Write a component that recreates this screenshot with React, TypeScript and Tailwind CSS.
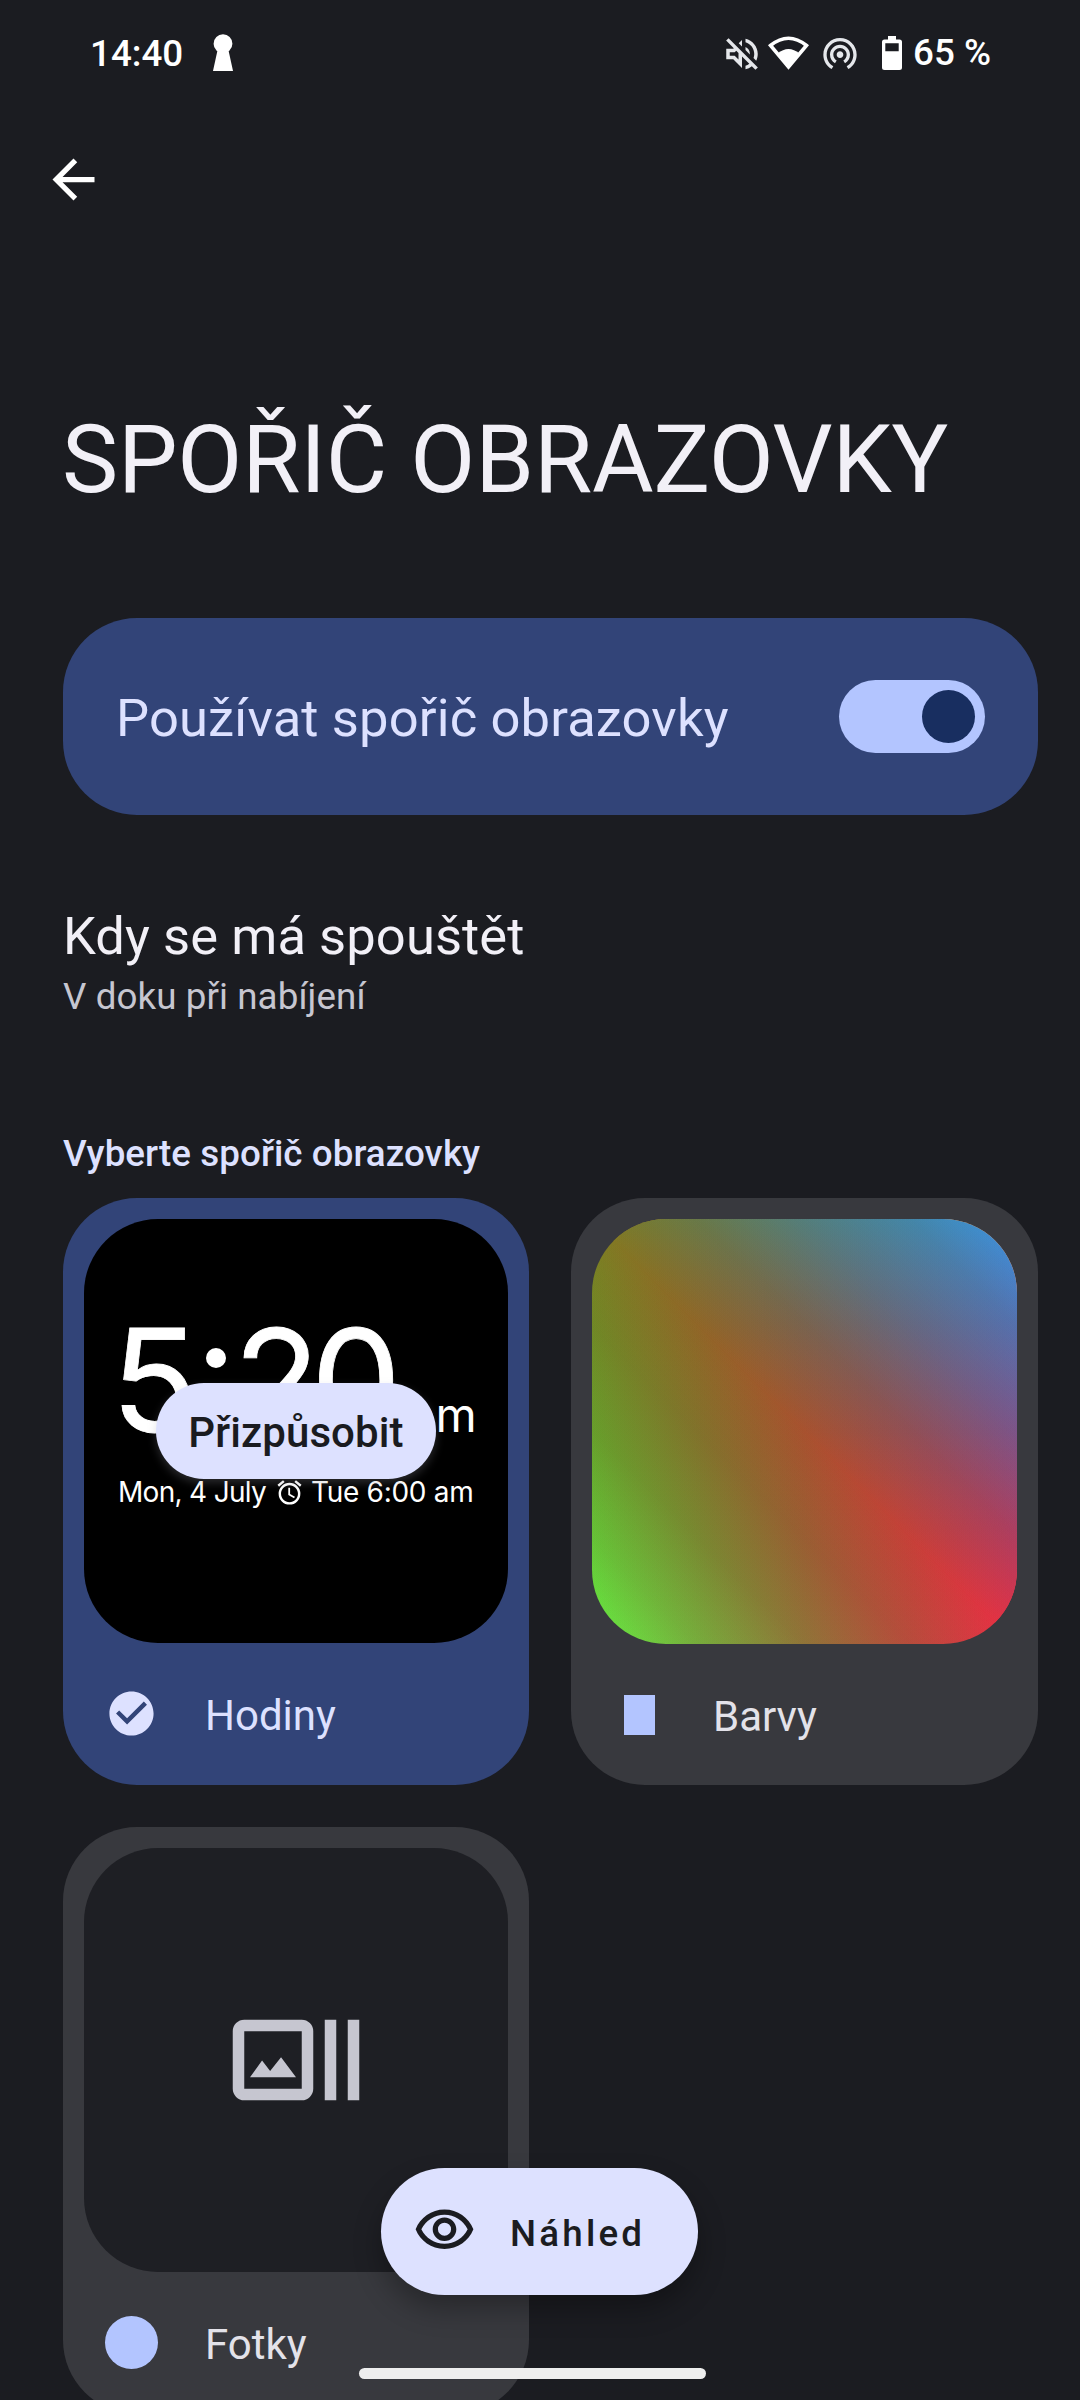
import type { ReactNode } from "react";
import {
  MdArrowBack,
  MdCheckCircle,
  MdOutlineAlarm,
  MdOutlineVisibility,
  MdOutlineVolumeOff,
  MdWifiTethering,
} from "react-icons/md";

function StatusBar() {
  return (
    <div className="flex h-[108px] items-start pl-[90px] pr-[89px] text-[36.75px] font-medium leading-[44px] text-white">
      <span className="mt-8">14:40</span>
      <svg className="ml-[29px] mt-[34px]" width="22" height="38" viewBox="0 0 22 38" fill="currentColor">
        <circle cx="11" cy="9.7" r="9.4" />
        <path d="M6 14h10l5 23H1z" />
      </svg>
      <div className="ml-auto flex items-start">
        <MdOutlineVolumeOff className="mt-[33px] text-gray-200" size={42} />
        <svg className="ml-[5px] mr-px mt-[35px]" width="41" height="36" viewBox="0 0 41 36">
          <path d="M2.5 10.5Q20.5-4 38.5 10.5L20.5 32Z" fill="none" stroke="#fff" strokeWidth="3.6" />
          <path d="M9.5 18.5Q20.5 9.5 31.5 18.5L20.5 33Z" fill="#fff" />
        </svg>
        <MdWifiTethering className="ml-[10px] mt-[33px] text-gray-200" size={40} />
        <svg className="ml-[22px] mt-[36px]" width="20" height="34" viewBox="0 0 20 34" fill="#fff">
          <path
            fillRule="evenodd"
            d="M6 0h8v3.5h3.5A2.5 2.5 0 0 1 20 6v25.5a2.5 2.5 0 0 1-2.5 2.5h-15A2.5 2.5 0 0 1 0 31.5V6a2.5 2.5 0 0 1 2.5-2.5H6zM3.3 7.3v8h13.4v-8z"
          />
        </svg>
        <span className="ml-[11px] mt-[31px] whitespace-nowrap">65 %</span>
      </div>
    </div>
  );
}

/* Four corner colours blended as two triangles that share the main diagonal */
function ColorsPreview() {
  return (
    <div className="relative isolate size-full">
      <div className="absolute inset-0 isolate bg-black">
        <div className="absolute inset-0 bg-[linear-gradient(to_bottom,#7f7c22,#000)] mix-blend-plus-lighter" />
        <div className="absolute inset-0 bg-[linear-gradient(to_bottom_left,#000_50%,#112b0c_62.5%,#28601a_75%,#46a32e_87.5%,#67f043)] mix-blend-plus-lighter" />
        <div className="absolute inset-0 bg-[linear-gradient(to_right,#000,#31090e_25%,#68141e_50%,#a62130_75%,#ea2f45)] mix-blend-plus-lighter" />
      </div>
      <div className="absolute inset-0 isolate bg-black [clip-path:polygon(0_0,100%_0,100%_100%)]">
        <div className="absolute inset-0 bg-[linear-gradient(to_right,#7f7c22,#000)] mix-blend-plus-lighter" />
        <div className="absolute inset-0 bg-[linear-gradient(to_top_right,#000_50%,#091c2f_62.5%,#14406a_75%,#24679f_87.5%,#3a95e6)] mix-blend-plus-lighter" />
        <div className="absolute inset-0 bg-[linear-gradient(to_bottom,#000,#31090e_25%,#68141e_50%,#a62130_75%,#ea2f45)] mix-blend-plus-lighter" />
      </div>
    </div>
  );
}

function ClockPreview() {
  return (
    <div className="relative size-full bg-black text-white">
      <div className="flex items-baseline pl-[27px] pt-[81px] font-['Inter'] leading-[160px]">
        <span className="w-[86px] text-[143px] [-webkit-text-stroke:0.8px_#fff]">5</span>
        <span className="mt-[48px] flex w-[36px] flex-col gap-[42px] self-start pl-[9px]">
          <span className="size-5 rounded-full bg-white" />
          <span className="size-5 rounded-full bg-white" />
        </span>
        <span className="w-[78px] text-[143px] [-webkit-text-stroke:0.8px_#fff]">2</span>
        <span className="w-[98px] text-[143px] [-webkit-text-stroke:0.8px_#fff]">0</span>
        <span className="text-[47px]">am</span>
      </div>
      <div className="absolute left-[34px] top-[254px] flex items-center whitespace-nowrap font-['Inter'] text-[28px] leading-[38px]">
        <span className="tracking-[-0.7px]">Mon, 4 July</span>
        <MdOutlineAlarm className="ml-[9px] mr-[7px]" size={29} />
        <span className="tracking-[-0.3px]">Tue 6:00 am</span>
      </div>
      <button className="absolute left-[72px] top-[164px] h-24 w-[280px] rounded-full bg-[#dde1ff] text-[42px] font-medium leading-[99px] tracking-[0.1px] text-[#1a1b20] shadow-[0_4px_10px_rgba(150,150,160,0.28)]">
        Přizpůsobit
      </button>
    </div>
  );
}

function PhotosPreview() {
  return (
    <div className="flex size-full items-center justify-center bg-[#1e1f24]">
      <svg width="138" height="138" viewBox="0 0 24 24" fill="#c6c6d0">
        <path
          fillRule="evenodd"
          d="M3 5h10a2 2 0 0 1 2 2v10a2 2 0 0 1-2 2H3a2 2 0 0 1-2-2V7a2 2 0 0 1 2-2zM3 7v10h10V7z"
        />
        <path d="M17 5h2v14h-2zM21 5h2v14h-2zM4 15l2.1-2.9 1.4 1.8 1.9-2.4L12 15z" />
      </svg>
    </div>
  );
}

type DreamCardProps = {
  label: string;
  icon: ReactNode;
  preview: ReactNode;
  selected?: boolean;
};

function DreamCard({ label, icon, preview, selected }: DreamCardProps) {
  return (
    <div
      className={
        selected
          ? "h-[587px] rounded-[74px] bg-[#324478] p-[21px] text-[#dde1ff]"
          : "h-[587px] rounded-[74px] bg-[#38393e] p-[21px] text-[#e3e2e9]"
      }
    >
      <div className="aspect-square overflow-hidden rounded-[74px]">{preview}</div>
      <div className="flex h-[142px] items-center pl-[21px]">
        <div className="-mt-px flex w-[53px] justify-center">{icon}</div>
        <span className="ml-[47px] mt-[3px] text-[42px] leading-[50px]">{label}</span>
      </div>
    </div>
  );
}

export default function App() {
  return (
    <div className="relative h-[2400px] w-[1080px] overflow-hidden bg-[#1b1c21] font-['Roboto',sans-serif]">
      <StatusBar />

      <header className="pt-[40px]">
        <MdArrowBack className="ml-[42px] text-white" size={63} />
        <h1 className="ml-[62px] mt-[193px] whitespace-nowrap text-[94.5px] leading-[112px] tracking-[-0.18px] text-[#f2f0f7]">
          SPOŘIČ OBRAZOVKY
        </h1>
      </header>

      <main className="mt-[102px] pl-[63px] pr-[42px]">
        <div className="flex h-[197px] items-center justify-between rounded-[74px] bg-[#324478] pl-[53px] pr-[53px]">
          <span className="mt-[3px] text-[52.5px] leading-[62px] tracking-[0.15px] text-[#dde1ff]">
            Používat spořič obrazovky
          </span>
          <div className="flex h-[73px] w-[146px] items-center justify-end rounded-full bg-[#b3c5ff] pr-[10px]">
            <div className="size-[53px] rounded-full bg-[#182e60]" />
          </div>
        </div>

        <section className="mt-[90px]">
          <p className="text-[52.5px] leading-[62px] tracking-[0.08px] text-[#f2f0f7]">Kdy se má spouštět</p>
          <p className="mt-[8px] text-[36.75px] leading-[44px] tracking-[0.08px] text-[#c6c6d0]">V doku při nabíjení</p>
        </section>

        <h2 className="mt-[113px] text-[36.75px] font-medium leading-[44px] tracking-[0.06px] text-[#dde1ff]">
          Vyberte spořič obrazovky
        </h2>

        <div className="mt-[22px] grid grid-cols-[466px_467px] gap-[42px]">
          <DreamCard label="Hodiny" icon={<MdCheckCircle size={53} />} preview={<ClockPreview />} selected />
          <DreamCard label="Barvy" icon={<div className="h-10 w-[31px] bg-[#b3c5ff]" />} preview={<ColorsPreview />} />
          <DreamCard
            label="Fotky"
            icon={<div className="size-[53px] rounded-full bg-[#b3c5ff]" />}
            preview={<PhotosPreview />}
          />
        </div>
      </main>

      {/* Floating preview button */}
      <button className="absolute left-[381px] top-[2168px] flex h-[127px] w-[317px] items-center rounded-full bg-[#dde1ff] pl-[32px] text-[#1b1c21] shadow-[0_14px_28px_rgba(0,0,0,0.3)]">
        <MdOutlineVisibility className="-mt-[2px]" size={63} />
        <span className="ml-[34px] mt-[5px] text-[36.75px] font-medium leading-[44px] tracking-[3.2px]">Náhled</span>
      </button>

      <div className="absolute left-[359px] top-[2368px] h-[11px] w-[347px] rounded-full bg-[#eeeeee]" />
    </div>
  );
}
